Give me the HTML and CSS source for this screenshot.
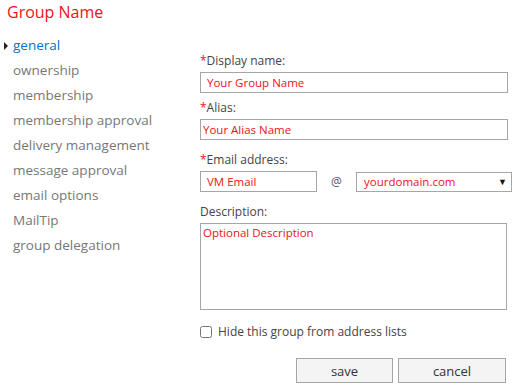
FILE: index.html
```html
<!DOCTYPE html>
<html lang="en">
<head>
    <meta charset="UTF-8">
    <meta name="viewport" content="width=device-width, initial-scale=1.0">
    <title>Group Name</title>
    <link rel="stylesheet" href="styles.css">
</head>
<body>
    <h1 class="page-title">Group Name</h1>

    <div class="layout">
        <ul class="nav">
            <li class="nav-item active">general</li>
            <li class="nav-item">ownership</li>
            <li class="nav-item">membership</li>
            <li class="nav-item">membership approval</li>
            <li class="nav-item">delivery management</li>
            <li class="nav-item">message approval</li>
            <li class="nav-item">email options</li>
            <li class="nav-item">MailTip</li>
            <li class="nav-item">group delegation</li>
        </ul>

        <form class="form">
            <div class="field">
                <label for="displayName"><span class="req">*</span>Display name:</label>
                <input type="text" id="displayName" class="text-input" value="Your Group Name">
            </div>

            <div class="field field-alias">
                <label for="alias"><span class="req">*</span>Alias:</label>
                <input type="text" id="alias" class="text-input flush" value="Your Alias Name">
            </div>

            <div class="field field-email">
                <label for="email"><span class="req">*</span>Email address:</label>
                <div class="email-row">
                    <input type="text" id="email" class="text-input email-input" value="VM Email">
                    <span class="at">@</span>
                    <div class="select">
                        <span>yourdomain.com</span>
                        <span class="select-arrow">▼</span>
                    </div>
                </div>
            </div>

            <div class="field field-desc">
                <label for="description">Description:</label>
                <textarea id="description" class="text-area">Optional Description</textarea>
            </div>

            <label class="check">
                <input type="checkbox">
                <span>Hide this group from address lists</span>
            </label>

            <div class="actions">
                <button type="button" class="btn btn-save">save</button>
                <button type="button" class="btn btn-cancel">cancel</button>
            </div>
        </form>
    </div>
</body>
</html>
```

FILE: styles.css
```css
* {
    margin: 0;
    padding: 0;
    box-sizing: border-box;
}

body {
    font-family: 'Segoe UI', 'Open Sans', 'Noto Sans', sans-serif;
    background: white;
    color: #333;
    width: 518px;
    height: 386px;
    overflow: hidden;
}

.page-title {
    color: #ee1122;
    font-size: 16px;
    font-weight: 400;
    line-height: 22px;
    padding: 1px 0 0 7px;
    height: 33px;
}

.layout {
    display: flex;
}

/* menu de gauche */
.nav {
    list-style: none;
    width: 200px;
    flex-shrink: 0;
}

.nav-item {
    position: relative;
    padding-left: 13px;
    font-size: 13.5px;
    line-height: 25px;
    color: #777;
}

.nav-item.active {
    color: #0072c6;
}

.nav-item.active::before {
    content: '';
    position: absolute;
    left: 4px;
    top: 9px;
    border-left: 4px solid #222;
    border-top: 4px solid transparent;
    border-bottom: 4px solid transparent;
}

/* formulaire */
.form {
    width: 312px;
    padding-top: 20px;
}

.field-alias {
    margin-top: 7px;
}

.field-email {
    margin-top: 12px;
}

.field-desc {
    margin-top: 12px;
}

label {
    display: block;
    font-size: 12px;
    line-height: 16px;
    color: #444;
    margin-bottom: 3px;
}

.req {
    color: #ee1122;
}

.text-input,
.text-area,
.select {
    font-family: inherit;
    font-size: 11.5px;
    color: #ee1122;
    border: 1px solid #a6a6a6;
    background: white;
}

.text-input {
    display: block;
    width: 308px;
    height: 21px;
    padding: 0 6px;
}

.text-input.flush {
    padding: 0 2px;
}

.email-row {
    display: flex;
    align-items: center;
}

.email-input {
    width: 117px;
}

.at {
    width: 39px;
    text-align: center;
    font-size: 12px;
    color: #555;
}

.select {
    width: 156px;
    height: 20px;
    display: flex;
    align-items: center;
    justify-content: space-between;
    padding: 0 4px 0 7px;
}

.select-arrow {
    color: #111;
    font-size: 9px;
}

.text-area {
    display: block;
    width: 307px;
    height: 87px;
    padding: 1px 2px;
    resize: none;
}

.check {
    display: flex;
    align-items: center;
    gap: 6px;
    margin-top: 14px;
    font-size: 12px;
    color: #444;
}

.check input {
    width: 12px;
    height: 12px;
    margin: 0;
}

.actions {
    display: flex;
    justify-content: flex-end;
    gap: 5px;
    margin-top: 18px;
    padding-right: 6px;
}

.btn {
    font-family: inherit;
    font-size: 13px;
    color: #333;
    height: 25px;
    background: #f4f4f4;
    border: 1px solid #a6a6a6;
}

.btn-save {
    width: 97px;
}

.btn-cancel {
    width: 108px;
}
```
